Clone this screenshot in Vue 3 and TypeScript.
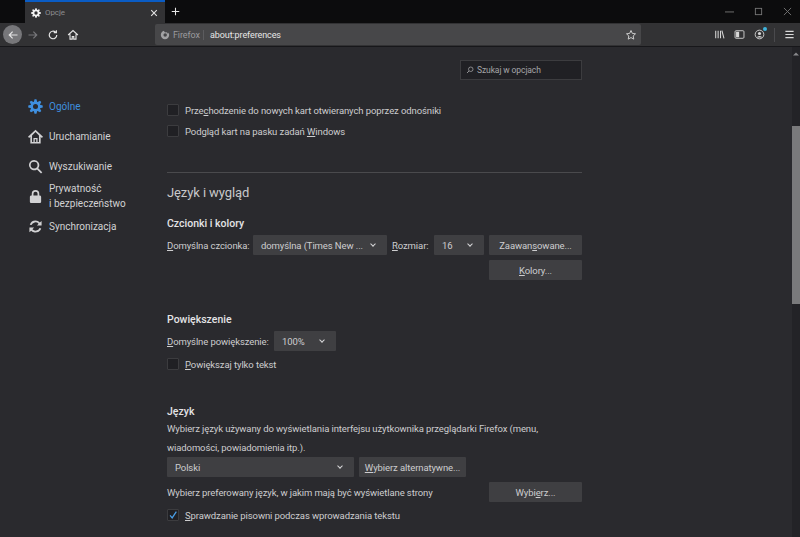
<template>
  <div class="browser">
    <div class="tabbar">
      <div class="tab">
        <svg class="tab-icon" viewBox="0 0 16 16"><path fill="#f4f4f4" fill-rule="evenodd" :d="gearPath" /></svg>
        <span class="tab-title">Opcje</span>
        <svg class="tab-close" viewBox="0 0 10 10"><path d="M1.500 1.500l7 7M8.500 1.500l-7 7" stroke="#e2e2e2" stroke-width="1.400" /></svg>
      </div>
      <svg class="new-tab" viewBox="0 0 12 12"><path d="M6 1v10M1 6h10" stroke="#e8e8e8" stroke-width="1.400" /></svg>
      <div class="window-controls">
        <svg viewBox="0 0 10 10"><path d="M0 5.500h10" stroke="#777" /></svg>
        <svg viewBox="0 0 10 10"><rect x="1.500" y="1.500" width="7" height="7" fill="none" stroke="#777" /></svg>
        <svg viewBox="0 0 10 10"><path d="M1 1l8 8M9 1l-8 8" stroke="#777" /></svg>
      </div>
    </div>

    <div class="toolbar">
      <div class="back-btn">
        <svg viewBox="0 0 16 16"><path d="M14 8H3M7.500 3.500 3 8l4.500 4.500" fill="none" stroke="#e4e4e4" stroke-width="1.600" /></svg>
      </div>
      <svg class="tool-icon forward" viewBox="0 0 16 16"><path d="M2 8h11M8.500 3.500 13 8l-4.500 4.500" fill="none" stroke="#77777a" stroke-width="1.600" /></svg>
      <svg class="tool-icon" viewBox="0 0 16 16"><path d="M13 8a5 5 0 1 1-1.600-3.700M12.500 1.500v3.400H9" fill="none" stroke="#e4e4e4" stroke-width="1.600" /></svg>
      <svg class="tool-icon" viewBox="0 0 16 16"><path d="M1.500 8 8 2l6.500 6M4 7v6.500h3V10h2v3.500h3V7" fill="none" stroke="#e4e4e4" stroke-width="1.500" /></svg>
      <div class="urlbar">
        <svg class="fx-icon" viewBox="0 0 16 16"><path fill="#a2a2a4" fill-rule="evenodd" d="M6.500 1.200C3.500 2 1.300 4.700 1.300 8a6.700 6.700 0 0 0 13.400 0c0-1.500-.5-2.900-1.300-4 .1 1-.2 1.700-.8 2.100C12 4 10 3.600 8.800 3.800 7.500 3.600 6.500 2.700 6.500 1.200zM8.300 5.300a2.800 2.800 0 1 1 0 5.600 2.800 2.800 0 0 1 0-5.600z" /></svg>
        <span class="fx-label">Firefox</span>
        <span class="url">about:preferences</span>
        <svg class="star" viewBox="0 0 16 16"><path d="M8 2l1.800 3.900 4.200.5-3.100 2.900.8 4.200L8 11.400l-3.700 2.100.8-4.200L2 6.400l4.200-.5z" fill="none" stroke="#cfcfcf" stroke-width="1.300" /></svg>
      </div>
      <div class="toolbar-right">
        <svg viewBox="0 0 16 16"><path d="M2.500 2.500v11M6 2.500v11M9.500 2.500v11M11.500 2.500l3 11" fill="none" stroke="#d8d8d8" stroke-width="1.500" /></svg>
        <svg viewBox="0 0 16 16"><rect x="1.500" y="2.500" width="13" height="11" rx="1.500" fill="none" stroke="#d8d8d8" stroke-width="1.300" /><rect x="3" y="4" width="4.500" height="8" fill="#d8d8d8" /></svg>
        <div class="account">
          <svg viewBox="0 0 16 16"><circle cx="8" cy="8" r="6.300" fill="none" stroke="#d8d8d8" stroke-width="1.300" /><circle cx="8" cy="6.500" r="2.300" fill="#d8d8d8" /><path d="M3.800 12.500a4.500 3.500 0 0 1 8.400 0z" fill="#d8d8d8" /></svg>
          <span class="badge"></span>
        </div>
        <span class="divider"></span>
        <svg viewBox="0 0 16 16"><path d="M2 3.500h12M2 8h12M2 12.500h12" stroke="#d8d8d8" stroke-width="1.700" /></svg>
      </div>
    </div>

    <div class="page">
      <nav class="sidebar">
        <a v-for="item in navItems" :key="item.label" class="nav-item" :class="{ active: item.active }">
          <svg viewBox="0 0 16 16"><path fill="currentColor" fill-rule="evenodd" :d="item.icon" /></svg>
          <span v-if="!item.lines">{{ item.label }}</span>
          <span v-else>{{ item.lines[0] }}<br />{{ item.lines[1] }}</span>
        </a>
      </nav>

      <main class="content">
        <div class="search-row">
          <div class="search-box">
            <svg viewBox="0 0 16 16"><circle cx="9.500" cy="6.500" r="4.500" fill="none" stroke="#a5a5a8" stroke-width="1.500" /><path d="M6 10l-4 4" stroke="#a5a5a8" stroke-width="1.700" /></svg>
            <span>Szukaj w opcjach</span>
          </div>
        </div>

        <label class="check first"><span class="box"></span><span>Prze<u>c</u>hodzenie do nowych kart otwieranych poprzez odnośniki</span></label>
        <label class="check second"><span class="box"></span><span>Podgląd kart na pasku zadań <u>W</u>indows</span></label>

        <hr />
        <h1>Język i wygląd</h1>

        <h2 class="fonts-head">Czcionki i kolory</h2>
        <div class="row fonts-row">
          <span class="font-label"><u>D</u>omyślna czcionka:</span>
          <div class="select font-select"><span>domyślna (Times New ...</span><i class="chev"></i></div>
          <span class="size-label"><u>R</u>ozmiar:</span>
          <div class="select size-select"><span>16</span><i class="chev"></i></div>
          <button class="btn wide">Zaawan<u>s</u>owane...</button>
        </div>
        <div class="row colors-row"><button class="btn wide"><u>K</u>olory...</button></div>

        <h2 class="zoom-head">Powiększenie</h2>
        <div class="row zoom-row">
          <span class="zoom-label"><u>D</u>omyślne powiększenie:</span>
          <div class="select zoom-select"><span>100%</span><i class="chev"></i></div>
        </div>
        <label class="check text-only"><span class="box"></span><span><u>P</u>owiększaj tylko tekst</span></label>

        <h2 class="lang-head">Język</h2>
        <p class="lang-desc">Wybierz język używany do wyświetlania interfejsu użytkownika przeglądarki Firefox (menu,<br />wiadomości, powiadomienia itp.).</p>
        <div class="row lang-row">
          <div class="select lang-select"><span>Polski</span><i class="chev"></i></div>
          <button class="btn alt"><u>W</u>ybierz alternatywne...</button>
        </div>
        <div class="row pref-row">
          <span>Wybierz preferowany język, w jakim mają być wyświetlane strony</span>
          <button class="btn wide push">Wybi<u>e</u>rz...</button>
        </div>
        <label class="check spell"><span class="box"><svg viewBox="0 0 12 12"><path d="M2.500 6.500 5 9.500 10 2" fill="none" stroke="#4a9fe8" stroke-width="1.500" /></svg></span><span><u>S</u>prawdzanie pisowni podczas wprowadzania tekstu</span></label>
      </main>

      <div class="scrollbar">
        <svg class="scroll-up" viewBox="0 0 8 8"><path d="M1 5.500 4 2.500l3 3z" fill="#88888b" /></svg>
        <div class="thumb"></div>
      </div>
    </div>
  </div>
</template>

<script setup lang="ts">
// 8 pointed teeth around a round hole
function buildGear(): string {
  const pts: string[] = []
  for (let i = 0; i < 8; i++) {
    const a = (i * Math.PI) / 4
    for (const [r, off] of [[5.2, -0.36], [7.8, -0.13], [7.8, 0.13], [5.2, 0.36]]) {
      const x = 8 + r * Math.cos(a + off)
      const y = 8 + r * Math.sin(a + off)
      pts.push(`${x.toFixed(2)} ${y.toFixed(2)}`)
    }
  }
  return `M${pts.join('L')}zM8 5.300a2.700 2.700 0 1 0 0 5.400 2.700 2.700 0 0 0 0-5.400z`
}

const gearPath = buildGear()

interface NavItem {
  label: string
  icon: string
  active?: boolean
  lines?: [string, string]
}

const navItems: NavItem[] = [
  { label: 'Ogólne', icon: gearPath, active: true },
  {
    label: 'Uruchamianie',
    icon: 'M8 .8 0 8.300l1.200 1.200 1.300-1.200V15.500h11V8.300l1.300 1.200L16 8.300zM4.300 13.800V6.800L8 3.300l3.700 3.500v7h-1.500V9.500H5.800v4.300zM7.200 11h1.600v2.800H7.200z'
  },
  {
    label: 'Wyszukiwanie',
    icon: 'M6.500 1a5.500 5.500 0 0 1 4.400 8.800l4.300 4.300-1.300 1.300-4.300-4.300A5.500 5.500 0 1 1 6.500 1zm0 1.800a3.700 3.700 0 1 0 0 7.400 3.700 3.700 0 0 0 0-7.400z'
  },
  {
    label: 'Prywatność',
    lines: ['Prywatność', 'i bezpieczeństwo'],
    icon: 'M8 1a4 4 0 0 1 4 4v2h.5c.8 0 1.500.7 1.500 1.500v5c0 .8-.7 1.500-1.500 1.500h-9C2.700 15 2 14.300 2 13.500v-5C2 7.700 2.700 7 3.500 7H4V5a4 4 0 0 1 4-4zm0 1.800A2.200 2.200 0 0 0 5.800 5v2h4.400V5A2.200 2.200 0 0 0 8 2.800z'
  },
  {
    label: 'Synchronizacja',
    icon: 'M8 1.500c1.900 0 3.500.8 4.600 2.100L14.500 2v5H9.500l1.800-1.900A4.500 4.500 0 0 0 3.700 6.500L1.900 6A6.400 6.400 0 0 1 8 1.500zM1.500 9h5l-1.800 1.900a4.500 4.500 0 0 0 7.600-1.400l1.800.5A6.400 6.400 0 0 1 3.400 12.400L1.500 14z'
  }
]
</script>

<style>
html,
body {
  margin: 0;
  background: #2a2a2e;
  overflow: hidden;
}
</style>

<style scoped>
.browser {
  width: 800px;
  height: 537px;
  display: flex;
  flex-direction: column;
  overflow: hidden;
  background: #2a2a2e;
  color: #cdcdcf;
  font-family: "Roboto", "Noto Sans", sans-serif;
  font-size: 9.500px;
  letter-spacing: -0.1px;
  white-space: nowrap;
}

.tabbar {
  height: 23px;
  flex: none;
  display: flex;
  align-items: center;
  background: #0c0c0d;
  padding-left: 25px;
}

.tab {
  width: 140px;
  height: 23px;
  box-sizing: border-box;
  display: flex;
  align-items: center;
  padding: 0 7px 0 6px;
  background: #323234;
  border-top: 2px solid #0a5cc4;
  gap: 4px;
}

.tab-icon {
  width: 10px;
  height: 10px;
}

.tab-title {
  font-size: 8px;
  color: #8d8d90;
  flex: 1;
}

.tab-close {
  width: 8px;
  height: 8px;
}

.new-tab {
  width: 9px;
  height: 9px;
  margin-left: 6px;
}

.window-controls {
  margin-left: auto;
  display: flex;
  gap: 20px;
  padding-right: 8px;
}

.window-controls svg {
  width: 9px;
  height: 9px;
}

.toolbar {
  height: 23px;
  flex: none;
  display: flex;
  align-items: center;
  background: #323234;
  border-bottom: 1px solid #17171a;
  padding-left: 3px;
}

.back-btn {
  width: 19px;
  height: 19px;
  border-radius: 50%;
  background: #77777a;
  display: flex;
  align-items: center;
  justify-content: center;
}

.back-btn svg {
  width: 12px;
  height: 12px;
}

.tool-icon {
  width: 12px;
  height: 12px;
  margin-left: 8px;
}

.tool-icon.forward {
  margin-left: 5px;
}

.urlbar {
  width: 486px;
  height: 21px;
  margin-left: 76px;
  display: flex;
  align-items: center;
  background: #474749;
  border-radius: 2px;
  box-sizing: border-box;
  padding: 0 4px 0 5px;
}

.fx-icon {
  width: 10px;
  height: 10px;
  margin-right: 3px;
}

.fx-label {
  width: 30px;
  font-size: 9px;
  color: #9b9b9e;
  margin-right: 6px;
  border-right: 1px solid #5c5c5f;
}

.url {
  font-size: 9px;
  color: #e6e6e6;
  flex: 1;
}

.star {
  width: 12px;
  height: 12px;
}

.toolbar-right {
  margin-left: auto;
  display: flex;
  align-items: center;
  gap: 9px;
  padding-right: 5px;
}

.toolbar-right svg {
  width: 11px;
  height: 11px;
  display: block;
}

.account {
  position: relative;
}

.badge {
  position: absolute;
  top: -2px;
  right: -2px;
  width: 4px;
  height: 4px;
  border-radius: 50%;
  background: #3fb4dc;
}

.divider {
  width: 1px;
  height: 14px;
  background: #4a4a4d;
}

.page {
  flex: 1;
  display: flex;
  min-height: 0;
  background: #2a2a2e;
}

.sidebar {
  width: 167px;
  flex: none;
  box-sizing: border-box;
  padding: 44px 0 0 28px;
  display: flex;
  flex-direction: column;
}

.nav-item {
  height: 30px;
  display: flex;
  align-items: center;
  gap: 6px;
  color: #d2d2d4;
  font-size: 10px;
  letter-spacing: 0;
  line-height: 15px;
}

.nav-item svg {
  width: 15px;
  height: 15px;
  flex: none;
}

.nav-item.active {
  color: #3f8fdf;
}

.content {
  width: 415px;
  flex: none;
}

.search-row {
  display: flex;
  justify-content: flex-end;
  padding-top: 13px;
}

.search-box {
  width: 122px;
  height: 20px;
  box-sizing: border-box;
  display: flex;
  align-items: center;
  gap: 3px;
  padding-left: 5px;
  background: #202024;
  border: 1px solid #3c3c3f;
  font-size: 8.500px;
  color: #a5a5a8;
}

.search-box svg {
  width: 8px;
  height: 8px;
}

.check {
  display: flex;
  align-items: center;
  gap: 6px;
  height: 14px;
}

.box {
  width: 12px;
  height: 12px;
  flex: none;
  box-sizing: border-box;
  background: #202024;
  border: 1px solid #3c3c3f;
  border-radius: 1px;
}

.box svg {
  display: block;
  width: 10px;
  height: 10px;
}

.first {
  margin-top: 23px;
}

.second {
  margin-top: 7px;
}

hr {
  margin: 34px 0 0;
  border: 0;
  border-top: 1px solid #4a4a4d;
}

h1 {
  margin: 11px 0 0;
  font-size: 13px;
  line-height: 18px;
  font-weight: 400;
  color: #c8c8ca;
}

h2 {
  margin: 0;
  font-size: 10.500px;
  letter-spacing: 0;
  line-height: 14px;
  font-weight: 500;
  color: #e4e4e6;
}

.row {
  display: flex;
  align-items: center;
}

.select,
.btn {
  height: 20px;
  box-sizing: border-box;
  background: #3f3f42;
  color: #cdcdcf;
  font: inherit;
  letter-spacing: inherit;
  border: 0;
  border-radius: 1px;
  padding: 0;
}

.select {
  display: flex;
  align-items: center;
  justify-content: space-between;
  padding: 0 12px 0 8px;
}

.chev {
  width: 3px;
  height: 3px;
  border-right: 1px solid #d6d6d8;
  border-bottom: 1px solid #d6d6d8;
  transform: translateY(-1px) rotate(45deg);
}

.wide {
  width: 93px;
}

.fonts-head {
  margin-top: 15px;
}

.fonts-row {
  margin-top: 4px;
}

.font-label {
  width: 86px;
}

.font-select {
  width: 134px;
}

.size-label {
  width: 42px;
  margin-left: 5px;
}

.size-select {
  width: 50px;
}

.fonts-row .btn {
  margin-left: 5px;
}

.colors-row {
  justify-content: flex-end;
  margin-top: 5px;
}

.zoom-head {
  margin-top: 33px;
}

.zoom-row {
  margin-top: 4px;
}

.zoom-label {
  width: 107px;
}

.zoom-select {
  width: 62px;
}

.text-only {
  margin-top: 6px;
}

.lang-head {
  margin-top: 34px;
}

.lang-desc {
  margin: 0;
  line-height: 19px;
}

.lang-row {
  margin-top: 0;
}

.lang-select {
  width: 187px;
}

.alt {
  width: 107px;
  margin-left: 5px;
}

.pref-row {
  margin-top: 5px;
}

.push {
  margin-left: auto;
}

.spell {
  margin-top: 6px;
}

.scrollbar {
  position: relative;
  width: 8px;
  margin-left: auto;
  background: #232327;
  padding-top: 79px;
}

.scroll-up {
  position: absolute;
  top: 3px;
  left: 0;
  width: 8px;
  height: 8px;
}

.thumb {
  height: 178px;
  background: #7a7a7c;
}
</style>
